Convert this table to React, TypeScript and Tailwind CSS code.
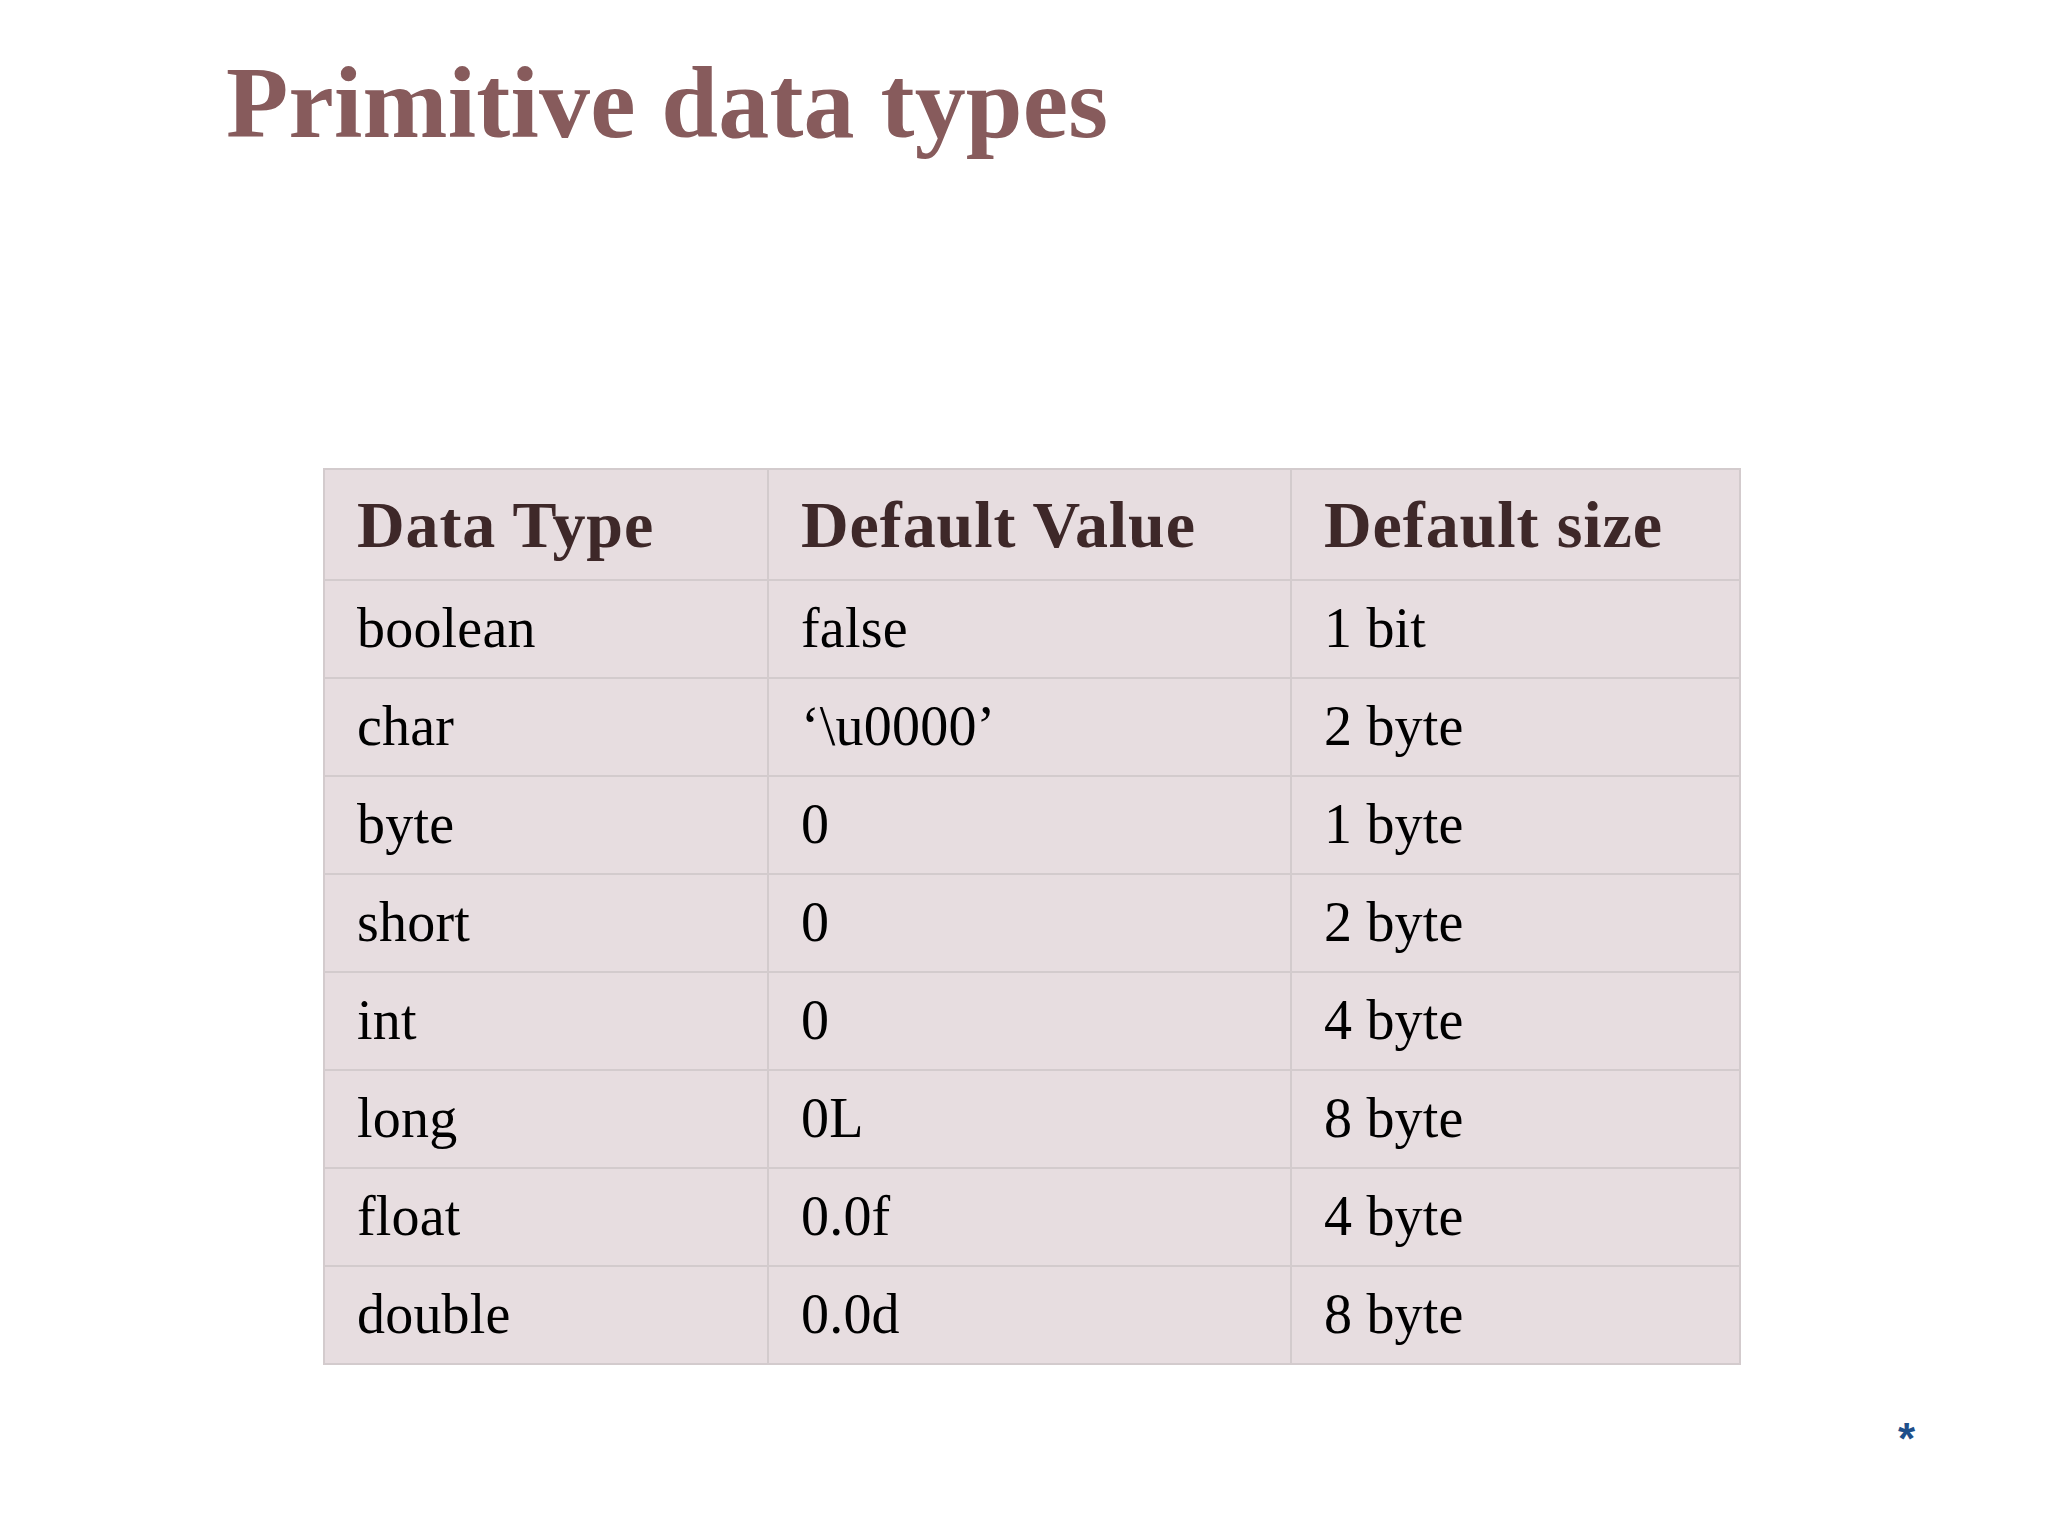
import React from "react";

const rows: [string, string, string][] = [
  ["boolean", "false", "1 bit"],
  ["char", "\u2018\\u0000\u2019", "2 byte"],
  ["byte", "0", "1 byte"],
  ["short", "0", "2 byte"],
  ["int", "0", "4 byte"],
  ["long", "0L", "8 byte"],
  ["float", "0.0f", "4 byte"],
  ["double", "0.0d", "8 byte"],
];

export default function App() {
  return (
    <div
      className="w-[2048px] h-[1536px] bg-white overflow-hidden flex flex-col"
      style={{ fontFamily: '"Liberation Serif", "Times New Roman", serif' }}
    >
      <h1 className="pt-[52px] pl-[226px] text-[102px] leading-none font-bold tracking-[0.2px] text-[#875b5c]">
        Primitive data types
      </h1>

      <div className="mt-[314px] ml-[323px] w-[1418px] bg-[#d3cbcd] p-[2px] grid grid-cols-[442px_521px_447px] gap-[2px]">
        {["Data Type", "Default Value", "Default size"].map((h) => (
          <div
            key={h}
            className="h-[109px] bg-[#e7dde0] pl-[32px] pt-[22px] text-[66px] leading-none font-bold tracking-[0.9px] text-[#3e2829]"
          >
            {h}
          </div>
        ))}
        {rows.map((r) =>
          r.map((c, i) => (
            <div
              key={r[0] + i}
              className="h-[96px] bg-[#e7dde0] pl-[32px] pt-[19px] text-[56px] leading-none tracking-[0.2px] text-black"
            >
              {c}
            </div>
          ))
        )}
      </div>

      <div
        className="mt-[52px] ml-[1898px] text-[44px] leading-none font-bold text-[#1f4f8a]"
        style={{ fontFamily: '"Liberation Sans", Arial, sans-serif' }}
      >
        *
      </div>
    </div>
  );
}
